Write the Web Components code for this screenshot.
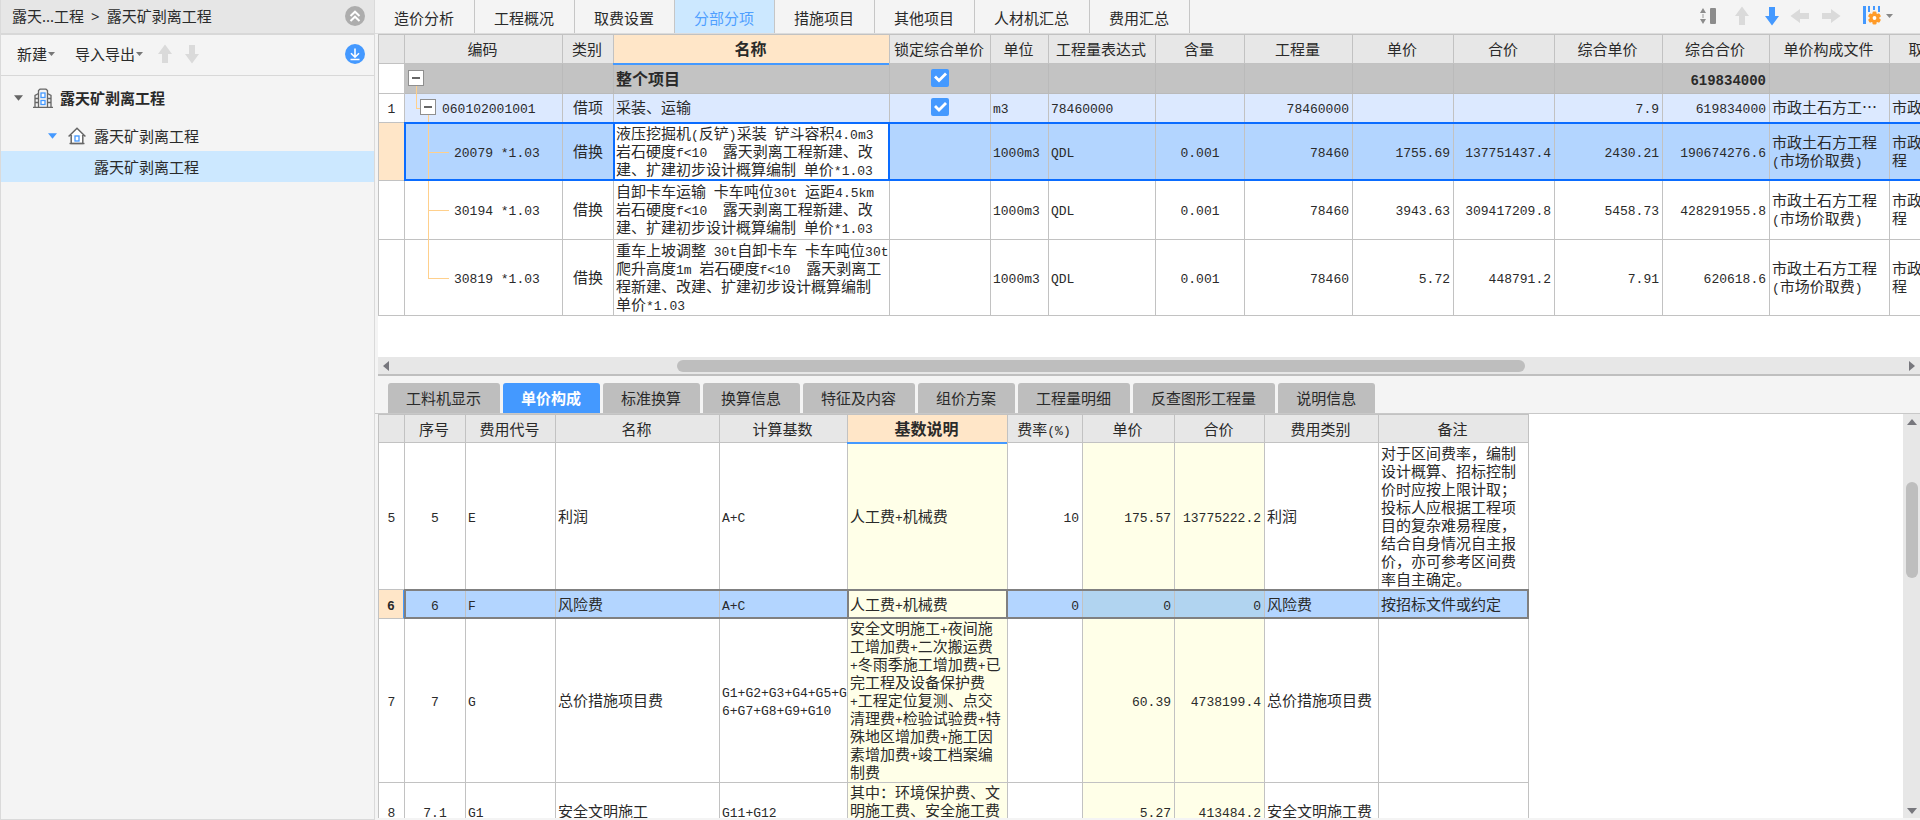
<!DOCTYPE html>
<html lang="zh-CN">
<head>
<meta charset="utf-8">
<title>露天矿剥离工程</title>
<style>
html, body { height: 100%; margin: 0; }
body {
  font: 15px/18px "Noto Sans", "Noto Sans CJK SC", sans-serif;
  color: #2a2a2a; background: #f4f4f4; overflow: hidden;
  text-spacing-trim: space-all;
}
</style>
</head>
<body>
<cost-app></cost-app>
<script>
const BASE = `
  *, *::before, *::after { box-sizing: border-box; }
  button { font: inherit; color: inherit; background: none; border: 0; padding: 0; margin: 0; cursor: pointer; }
  svg { display: block; }
`;

function define(name, css, build) {
  customElements.define(name, class extends HTMLElement {
    constructor() {
      super();
      this.attachShadow({ mode: 'open' });
    }
    connectedCallback() {
      this.shadowRoot.innerHTML = `<style>${BASE}${css}</style>${build(this)}`;
    }
  });
}

/* ---------- icons ---------- */
const ICONS = {
  up: [14, 20, '<path d="M7 0.5 14 10H10V19H4V10H0Z" fill="currentColor"/>'],
  down: [14, 20, '<path d="M7 19.5 14 10H10V1H4V10H0Z" fill="currentColor"/>'],
  left: [20, 14, '<path d="M0.500 7 10 0V4H19V10H10V14Z" fill="currentColor"/>'],
  right: [20, 14, '<path d="M19.500 7 10 0V4H1V10H10V14Z" fill="currentColor"/>'],
  caret: [7, 4, '<path d="M0 0H7L3.500 4Z" fill="currentColor"/>'],
  twist: [9, 6, '<path d="M0 0.300H9L4.500 5.700Z" fill="currentColor"/>'],
  collapse: [20, 20, '<circle cx="10" cy="10" r="10" fill="#adadad"/><path d="M5.500 10 10 5.700 14.500 10M5.500 15 10 10.700 14.500 15" fill="none" stroke="#fff" stroke-width="2"/>'],
  download: [20, 20, '<circle cx="10" cy="10" r="10" fill="#4499ff"/><path d="M10 4.500V13M6 9.300 10 13.200 14 9.300M5.500 15.500H14.500" fill="none" stroke="#fff" stroke-width="1.600"/>'],
  building: [20, 20, '<g fill="none" stroke="#666" stroke-width="1.300"><path d="M0 19.300H20M5.500 19V2.500L7 1.200H13L14.500 2.500V19"/><path d="M5.500 5.500 2 7.500V19M14.500 5.500 18 7.500V19"/><path d="M2 10.500H5.500M2 14.500H5.500M14.500 10.500H18M14.500 14.500H18"/></g><g fill="#fff" stroke="#4499ff" stroke-width="1.300"><rect x="8" y="5" width="4" height="4.500"/><rect x="8" y="12.500" width="4" height="4"/></g>'],
  house: [18, 18, '<path d="M3.200 8V16.500H14.800V8M0.600 9.500 9 1.200 17.400 9.500" fill="#fff" stroke="#666" stroke-width="1.500"/><path d="M1.500 16.500H16.500" stroke="#666" stroke-width="1.300"/><rect x="7" y="9" width="4" height="5" fill="#fff" stroke="#4499ff" stroke-width="1.300"/>'],
  rowheight: [16, 16, '<path d="M0 5 3 0 6 5ZM0 11 3 16 6 11Z" fill="#8c8c8c"/><path d="M3 6V10" stroke="#c8c8c8" stroke-width="2"/><rect x="10" y="0" width="6" height="16" rx="1" fill="#8c8c8c"/>'],
  columns: [18, 19, '<g fill="#4499ff"><rect x="0" y="0" width="3" height="18"/><rect x="5" y="0" width="2" height="6"/><rect x="10" y="0" width="2" height="4"/><rect x="15" y="0" width="2" height="6"/></g><g transform="translate(11.500 12)" fill="#ff9b28"><circle r="4.800"/><rect x="-2" y="-6.500" width="4" height="13" rx="1.200"/><rect x="-2" y="-6.500" width="4" height="13" rx="1.200" transform="rotate(60)"/><rect x="-2" y="-6.500" width="4" height="13" rx="1.200" transform="rotate(120)"/><circle r="1.900" fill="#fff"/></g>'],
};
define('app-icon', `:host { display: block; flex: none; }`, el => {
  const [w, h, body] = ICONS[el.getAttribute('name')];
  return `<svg width="${w}" height="${h}" viewBox="0 0 ${w} ${h}" aria-hidden="true">${body}</svg>`;
});
define('icon-button', `
  :host { display: block; flex: none; }
  :host([tone="off"]) { color: #dadada; }
  :host([tone="blue"]) { color: #4499ff; }
  :host([tone="grey"]) { color: #888; }
  button { display: block; }
`, el => `<button type="button" aria-label="${el.getAttribute('label')}"><app-icon name="${el.getAttribute('name')}"></app-icon></button>`);

/* ---------- left panel ---------- */
define('menu-button', `
  :host { display: block; }
  button { display: flex; align-items: center; gap: 1px; }
  app-icon { color: #777; }
`, () => `<button type="button"><slot></slot><app-icon name="caret"></app-icon></button>`);

define('tree-item', `
  :host { display: block; }
  button { display: flex; align-items: center; width: 100%; height: var(--h, 31px); padding-left: var(--indent, 0); text-align: left; }
  :host([bold]) button { font-weight: bold; }
  :host([selected]) button { background: #cce8ff; }
  .twist { margin-right: var(--twist-gap, 11px); color: var(--twist, #666); }
  .icon { margin-right: var(--icon-gap, 8px); }
`, el => {
  const icon = el.getAttribute('icon');
  return `<button type="button">${icon ? `<app-icon class="twist" name="twist"></app-icon><app-icon class="icon" name="${icon}"></app-icon>` : ''}<slot></slot></button>`;
});

define('project-panel', `
  :host { display: flex; flex-direction: column; background: #f4f4f4; border: solid #dadada; border-width: 0 1px 1px 1px; }
  header { display: flex; align-items: center; justify-content: space-between; height: 35px; padding: 0 9px 2px 11px; background: #e6e6e6; border-bottom: 2px solid #d8d8d8; }
  header nav { display: flex; gap: 7px; }
  .bar { display: flex; align-items: center; height: 41px; padding: 0 9px 2px 16px; border-bottom: 1px solid #d8d8d8; }
  .bar menu-button { margin-right: 20px; }
  .bar .io { margin-right: 15px; }
  .bar .first { margin-right: 13px; }
  .bar .last { margin-left: auto; }
  .root { --h: 44px; --indent: 13px; --twist-gap: 10px; --icon-gap: 7px; }
  .sub { --h: 31px; --indent: 47px; --twist: #4499ff; }
  .leaf { --h: 31px; --indent: 93px; }
`, () => `
  <header><nav><span>露天...工程</span><span>&gt;</span><span>露天矿剥离工程</span></nav>
    <icon-button name="collapse" label="收起"></icon-button></header>
  <div class="bar">
    <menu-button>新建</menu-button><menu-button class="io">导入导出</menu-button>
    <icon-button class="first" tone="off" name="up" label="上移"></icon-button>
    <icon-button tone="off" name="down" label="下移"></icon-button>
    <icon-button class="last" name="download" label="下载"></icon-button>
  </div>
  <div class="tree">
    <tree-item class="root" bold icon="building">露天矿剥离工程</tree-item>
    <tree-item class="sub" icon="house">露天矿剥离工程</tree-item>
    <tree-item class="leaf" selected>露天矿剥离工程</tree-item>
  </div>`);

/* ---------- tabs ---------- */
define('tab-button', `
  :host { display: block; }
  button { height: 100%; white-space: nowrap; }
  :host([kind="top"]) button { padding: 2px 20px 0 19px; border-right: 1px solid #c6c6c6; }
  :host([kind="top"][active]) button { background: #cce8ff; color: #4f9fff; }
  :host([kind="sub"]) button { padding: 0 19px 0 18px; background: #bebebe; border-radius: 3px 3px 0 0; }
  :host([kind="sub"][active]) button { background: #4499ff; color: #fff; font-weight: bold; }
`, el => `<button type="button" role="tab" aria-selected="${el.hasAttribute('active')}"><slot></slot></button>`);

define('tab-strip', `
  :host { display: flex; flex: none; }
  :host([kind="top"]) { height: 34px; border-bottom: 1px solid #dcdcdc; align-items: stretch; }
  :host([kind="sub"]) { height: 38px; padding: 7px 0 0 13px; gap: 3px; border-bottom: 1px solid #c8c8c8; }
  .tools { margin-left: auto; display: flex; align-items: center; padding: 0 27px 2px 0; }
  .tools > * { margin-left: 11px; }
  .tools > .up { margin-left: 19px; }
  .tools > .down { margin-left: 16px; }
  .tools > .cols { margin-left: 22px; }
  .tools > .caret { margin-left: 5px; }
`, el => {
  const kind = el.getAttribute('kind');
  const active = el.getAttribute('active');
  const tabs = el.getAttribute('tabs').split(',')
    .map(t => `<tab-button kind="${kind}" ${t === active ? 'active' : ''}>${t}</tab-button>`).join('');
  const tools = kind === 'top' ? `<div class="tools">
    <icon-button name="rowheight" label="行高"></icon-button>
    <icon-button class="up" tone="off" name="up" label="上移"></icon-button>
    <icon-button class="down" tone="blue" name="down" label="下移"></icon-button>
    <icon-button tone="off" name="left" label="升级"></icon-button>
    <icon-button tone="off" name="right" label="降级"></icon-button>
    <icon-button class="cols" name="columns" label="列设置"></icon-button>
    <icon-button class="caret" tone="grey" name="caret" label="更多"></icon-button></div>` : '';
  return tabs + tools;
});

/* ---------- scroll bar ---------- */
define('scroll-bar', `
  :host { display: flex; flex: none; background: #e7e7e7; color: #77777d; }
  :host([dir="x"]) { height: 17px; padding: 0 5px; align-items: center; }
  :host([dir="y"]) { width: 17px; padding: 5px 0 4px; flex-direction: column; align-items: center; }
  .track { flex: 1; display: flex; min-width: 0; min-height: 0; }
  .lead { flex: var(--lead) 0 0; }
  .thumb { flex: var(--thumb) 0 0; background: #bebebe; border-radius: 6px; }
  .tail { flex: var(--tail) 0 0; }
  :host([dir="y"]) .track { flex-direction: column; width: 12px; }
  :host([dir="x"]) .track { height: 12px; }
`, el => {
  const x = el.getAttribute('dir') === 'x';
  const b = (label, w, h, d) => `<button type="button" aria-label="${label}"><svg width="${w}" height="${h}" viewBox="0 0 ${w} ${h}"><path d="${d}" fill="currentColor"/></svg></button>`;
  return (x ? b('向左', 6, 10, 'M6 0V10L0 5Z') : b('向上', 10, 6, 'M0 6H10L5 0Z'))
    + '<div class="track"><div class="lead"></div><div class="thumb"></div><div class="tail"></div></div>'
    + (x ? b('向右', 6, 10, 'M0 0V10L6 5Z') : b('向下', 10, 6, 'M0 0H10L5 6Z'));
});

/* ---------- grid ---------- */
/* Latin runs are set in the half-width face, everything else in the CJK face. */
function runs(text) {
  return String(text).replace(/[\x20-\x7e\u00a0]+/g, m =>
    `<span class="m">${m.replace(/&/g, '&amp;').replace(/</g, '&lt;')}</span>`);
}
const GRIDS = {
  items: {
    label: '分部分项', headHeight: 29,
    cols: [['', 26, 'c'], ['编码', 158, 'code'], ['类别', 51, 'c'], ['名称', 276, 'l'], ['锁定综合单价', 101, 'c'],
      ['单位', 58, 'l'], ['工程量表达式', 107, 'l'], ['含量', 89, 'c'], ['工程量', 108, 'r'], ['单价', 101, 'r'],
      ['合价', 101, 'r'], ['综合单价', 108, 'r'], ['综合合价', 107, 'r'], ['单价构成文件', 120, 'l'], ['取费专业', 100, 'l']],
    focus: 3,
    rows: [
      { h: 30, cls: 'total', level: 0, cells: ['', '', '', '整个项目', true, '', '', '', '', '', '', '', '619834000', '', ''] },
      { h: 29, cls: 'group', level: 1, cells: ['1', '060102001001', '借项', '采装、运输', true, 'm3', '78460000', '', '78460000', '', '', '7.9', '619834000', '市政土石方工…', '市政土…'] },
      { h: 58, cls: 'sel', level: 2, cells: ['', '20079 *1.03', '借换', '液压挖掘机(反铲)采装 铲斗容积4.0m3\n岩石硬度f<10  露天剥离工程新建、改\n建、扩建初步设计概算编制 单价*1.03', '', '1000m3', 'QDL', '0.001', '78460', '1755.69', '137751437.4', '2430.21', '190674276.6', '市政土石方工程\n(市场价取费)', '市政土石方工\n程'] },
      { h: 59, cls: '', level: 2, cells: ['', '30194 *1.03', '借换', '自卸卡车运输 卡车吨位30t 运距4.5km\n岩石硬度f<10  露天剥离工程新建、改\n建、扩建初步设计概算编制 单价*1.03', '', '1000m3', 'QDL', '0.001', '78460', '3943.63', '309417209.8', '5458.73', '428291955.8', '市政土石方工程\n(市场价取费)', '市政土石方工\n程'] },
      { h: 76, cls: '', level: 3, cells: ['', '30819 *1.03', '借换', '重车上坡调整 30t自卸卡车 卡车吨位30t\n爬升高度1m 岩石硬度f<10  露天剥离工\n程新建、改建、扩建初步设计概算编制\n单价*1.03', '', '1000m3', 'QDL', '0.001', '78460', '5.72', '448791.2', '7.91', '620618.6', '市政土石方工程\n(市场价取费)', '市政土石方工\n程'] },
    ],
  },
  price: {
    label: '单价构成', headHeight: 28,
    cols: [['', 26, 'c'], ['序号', 61, 'c'], ['费用代号', 90, 'l'], ['名称', 164, 'l'], ['计算基数', 128, 'l'],
      ['基数说明', 160, 'l y'], ['费率(%)', 75, 'r'], ['单价', 92, 'r y'], ['合价', 90, 'r y'], ['费用类别', 114, 'l'], ['备注', 150, 'l']],
    focus: 5,
    rows: [
      { h: 147, cls: '', cells: ['5', '5', 'E', '利润', 'A+C', '人工费+机械费', '10', '175.57', '13775222.2', '利润', '对于区间费率，编制\n设计概算、招标控制\n价时应按上限计取；\n投标人应根据工程项\n目的复杂难易程度，\n结合自身情况自主报\n价，亦可参考区间费\n率自主确定。'] },
      { h: 29, cls: 'sel', cells: ['6', '6', 'F', '风险费', 'A+C', '人工费+机械费', '0', '0', '0', '风险费', '按招标文件或约定'] },
      { h: 164, cls: '', cells: ['7', '7', 'G', '总价措施项目费', 'G1+G2+G3+G4+G5+G\n6+G7+G8+G9+G10', '安全文明施工+夜间施\n工增加费+二次搬运费\n+冬雨季施工增加费+已\n完工程及设备保护费\n+工程定位复测、点交\n清理费+检验试验费+特\n殊地区增加费+施工因\n素增加费+竣工档案编\n制费', '', '60.39', '4738199.4', '总价措施项目费', ''] },
      { h: 58, cls: 'top', cells: ['8', '7.1', 'G1', '安全文明施工', 'G11+G12', '其中：环境保护费、文\n明施工费、安全施工费', '', '5.27', '413484.2', '安全文明施工费', ''] },
    ],
  },
};

define('data-grid', `
  :host { display: block; overflow: hidden; background: #fff; --ring: #0a6cff; --line: #c2c2c2; --drop: 2px;
    font: 15px/18px "Noto Sans CJK SC", sans-serif; }
  :host([data="price"]) { --ring: #808080; --drop: 1px; }
  table { table-layout: fixed; border-collapse: separate; border-spacing: 0; border: solid var(--line); border-width: 1px 0 0 1px; white-space: pre; }
  th, td { position: relative; padding: 0; border: solid var(--line); border-width: 0 1px 1px 0; font-weight: normal; }
  td { padding-bottom: var(--drop); }
  th { background: #e7e7e7; }
  th.c, th.code { padding-right: 2px; }
  th.on { background: #ffe6c8; font-size: 16px; font-weight: bold; padding-bottom: 2px; }
  th.on::after { content: ""; position: absolute; left: -1px; right: 0; bottom: -2px; height: 2px; background: #4499ff; z-index: 1; }
  .m { font-family: "Liberation Mono", monospace; font-size: 13px; line-height: 0; }
  .c { text-align: center; }
  .l { text-align: left; padding-left: 2px; }
  .r { text-align: right; padding-right: 3px; }
  .y { background: #ffffe8; }
  th.y { background: #e7e7e7; }
  th.on.y { background: #ffe6c8; }
  .total td { background: #c3c3c3; font-size: 16px; font-weight: bold; border-color: #bababa; }
  .total .m { font-size: 14px; }
  .group td { background: #dce9ff; }
  .total td.num, .group td.num { background: #fff; border-color: var(--line); }
  .sel td { background: #b3d5ff; }
  .sel td.y { background: #b1d4f0; }
  .sel td.num { background: #ffe6c8; font-weight: bold; }
  .sel td:not(.num)::after { content: ""; position: absolute; inset: -1px -1px -1px -1px; border: solid var(--ring); border-width: 2px 0; pointer-events: none; z-index: 1; }
  .sel td.first::after { border-left-width: 2px; }
  .sel td.focus { background: #fff; }
  .sel td.y.focus { background: #ffffe8; }
  .sel td.focus::after { border-width: 2px; z-index: 2; }
  :host([data="price"]) .sel td:last-child::after { border-right-width: 2px; }
  :host([data="price"]) .sel td.num { border-right: 2px solid #4499ff; }
  .top td.focus { vertical-align: top; }
  .code { text-align: left; }
  td.code[data-level="0"] { padding-left: 3px; }
  td.code[data-level="1"] { padding-left: 15px; }
  td.code[data-level="2"], td.code[data-level="3"] { padding-left: 49px; }
  th.code { text-align: center; }
  .node { display: flex; align-items: center; gap: 6px; }
  .toggle { width: 16px; height: 16px; background: #fff; border: 1px solid #8f8f8f; position: relative; padding: 0; cursor: pointer; z-index: 1; }
  .toggle::before { content: ""; display: block; height: 2px; margin: 0 3px; background: #666; }
  .v, .h { position: absolute; background: #ffd08c; }
  .v { width: 1px; }
  .h { height: 1px; top: 50%; }
  input { appearance: none; display: block; width: 18px; height: 18px; margin: 0 auto; border-radius: 2px; background: #4499ff; }
  input::before { content: ""; display: block; width: 18px; height: 18px; background: #fff; clip-path: polygon(3px 9px, 5px 7px, 8px 10px, 14px 4px, 16px 6px, 8px 14px); }
`, el => {
  const g = GRIDS[el.getAttribute('data')];
  const width = g.cols.reduce((s, c) => s + c[1], 1);
  const lines = {
    0: '<i class="v" style="left:11px;top:50%;bottom:-1px"></i>',
    1: '<i class="v" style="left:11px;top:0;bottom:50%"></i><i class="h" style="left:11px;width:5px"></i><i class="v" style="left:23px;top:50%;bottom:-1px"></i>',
    2: '<i class="v" style="left:23px;top:0;bottom:-1px"></i><i class="h" style="left:23px;width:21px"></i>',
    3: '<i class="v" style="left:23px;top:0;bottom:50%"></i><i class="h" style="left:23px;width:21px"></i>',
  };
  const head = g.cols.map((c, i) => `<th scope="col" class="${c[2].replace(/^[lr]/, 'c')} ${i === g.focus ? 'on' : ''}">${runs(c[0])}</th>`).join('');
  const body = g.rows.map(r => `<tr class="${r.cls}" style="height:${r.h}px">` + r.cells.map((v, i) => {
    const kind = g.cols[i][2];
    const cls = [kind, i === 0 ? 'num' : '', i === 1 ? 'first' : '', i === g.focus ? 'focus' : ''].join(' ');
    let inner = v === true ? `<input type="checkbox" checked aria-label="锁定综合单价">` : runs(v);
    if (kind === 'code') {
      const box = r.level < 2 ? '<button class="toggle" type="button" aria-label="折叠"></button>' : '';
      inner = lines[r.level] + `<div class="node">${box}<span>${inner}</span></div>`;
    }
    return `<td class="${cls}" ${kind === 'code' ? `data-level="${r.level}"` : ''}>${inner}</td>`;
  }).join('') + '</tr>').join('');
  return `<table aria-label="${g.label}" style="width:${width}px"><colgroup>${g.cols.map(c => `<col style="width:${c[1]}px">`).join('')}</colgroup>
    <thead><tr style="height:${g.headHeight}px">${head}</tr></thead><tbody>${body}</tbody></table>`;
});

/* ---------- page ---------- */
define('cost-app', `
  :host { display: grid; grid-template-columns: 375px minmax(0, 1fr); height: 100vh; }
  main { display: flex; flex-direction: column; min-height: 0; min-width: 0; padding-bottom: 2px; }
  .upper { flex: none; margin-left: 3px; padding-bottom: 41px; background: #fff; }
  .hbar { margin-left: 3px; --lead: 36; --thumb: 106; --tail: 48; }
  .vbar { --lead: 15; --thumb: 25; --tail: 60; }
  .split { flex: none; height: 2px; margin-left: 3px; background: #bfbfbf; }
  .lower { flex: 1; display: flex; min-height: 0; margin-left: 3px; }
  .lower data-grid { flex: 1; min-width: 0; }
`, () => `
  <project-panel></project-panel>
  <main>
    <tab-strip kind="top" active="分部分项" tabs="造价分析,工程概况,取费设置,分部分项,措施项目,其他项目,人材机汇总,费用汇总"></tab-strip>
    <div class="upper"><data-grid data="items"></data-grid></div>
    <scroll-bar class="hbar" dir="x"></scroll-bar>
    <div class="split"></div>
    <tab-strip kind="sub" active="单价构成" tabs="工料机显示,单价构成,标准换算,换算信息,特征及内容,组价方案,工程量明细,反查图形工程量,说明信息"></tab-strip>
    <div class="lower"><data-grid data="price"></data-grid><scroll-bar class="vbar" dir="y"></scroll-bar></div>
  </main>`);
</script>
</body>
</html>
